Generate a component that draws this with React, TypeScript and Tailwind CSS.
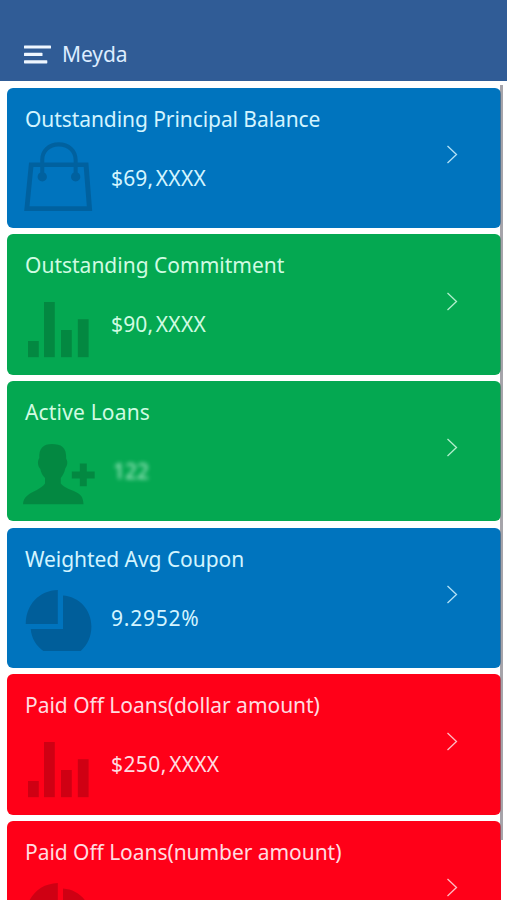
import type { ReactNode } from "react";
import clsx from "clsx";

type Card = {
  title: string;
  titleClass?: string;
  amount?: string;
  amountClass?: string;
  masked?: string;
  color: string;
  textColor: string;
  icon: ReactNode;
};

const cards: Card[] = [
  {
    title: "Outstanding Principal Balance",
    titleClass: "tracking-[-0.07px]",
    amount: "$69,",
    amountClass: "tracking-[0.15px]",
    masked: "XXXX",
    color: "bg-[#0074be]",
    textColor: "text-[#d3f4ff]",
    icon: <BagIcon />,
  },
  {
    title: "Outstanding Commitment",
    amount: "$90,",
    amountClass: "tracking-[0.15px]",
    masked: "XXXX",
    color: "bg-[#04a851]",
    textColor: "text-[#d0fbe2]",
    icon: <BarsIcon />,
  },
  {
    title: "Active Loans",
    titleClass: "tracking-[0.17px]",
    amount: "122",
    amountClass: "pl-[2px] font-medium opacity-75 blur-[2px]",
    color: "bg-[#04a851]",
    textColor: "text-[#d0fbe2]",
    icon: <UserPlusIcon />,
  },
  {
    title: "Weighted Avg Coupon",
    titleClass: "tracking-[-0.05px]",
    amount: "9.2952%",
    amountClass: "tracking-[0.75px]",
    color: "bg-[#0074be]",
    textColor: "text-[#d3f4ff]",
    icon: <PieIcon />,
  },
  {
    title: "Paid Off Loans(dollar amount)",
    titleClass: "tracking-[-0.03px]",
    amount: "$250,",
    amountClass: "tracking-[0.4px]",
    masked: "XXXX",
    color: "bg-[#ff0018]",
    textColor: "text-[#ffdce0]",
    icon: <BarsIcon />,
  },
  {
    title: "Paid Off Loans(number amount)",
    titleClass: "tracking-[-0.05px]",
    color: "bg-[#ff0018]",
    textColor: "text-[#ffdce0]",
    icon: <PieIcon />,
  },
];

export default function App() {
  return (
    <div className="relative flex h-[900px] w-[507px] flex-col overflow-hidden bg-white font-['Noto_Sans',sans-serif] text-[21px]">
      <header className="flex h-[81px] shrink-0 items-end bg-[#305c96] pb-[11px] pl-6">
        <MenuIcon />
        <h1 className="ml-[11px] leading-8 tracking-[-0.1px] text-[#dcecff]">Meyda</h1>
      </header>

      <main className="flex flex-col gap-[6.3px] pt-[6.5px] pr-[6px] pl-[7px]">
        {cards.map((card) => (
          <StatCard key={card.title} {...card} />
        ))}
      </main>

      {/* scroll thumb */}
      <div className="absolute top-[85px] right-[4px] h-[755px] w-[3px] bg-[#77737c]/65" />
    </div>
  );
}

function StatCard({ title, titleClass, amount, amountClass, masked, color, textColor, icon }: Card) {
  return (
    <section className={clsx("flex h-[140.4px] shrink-0 rounded-[6px] pl-4", color, textColor)}>
      <div className="flex flex-1 flex-col pt-[16px]">
        <h2 className={clsx("pl-[2px] leading-[30px] whitespace-nowrap", titleClass)}>{title}</h2>
        <div className="mt-[7px] flex">
          {icon}
          <p className="ml-4 flex pt-[22px] leading-[30px]">
            <span className={amountClass}>{amount}</span>
            {masked && <span className="ml-[2.5px] tracking-[0.25px]">{masked}</span>}
          </p>
        </div>
      </div>
      <svg className="mt-[57.5px] mr-[43px] shrink-0 opacity-85" width="12" height="19" viewBox="0 0 12 19" fill="none" stroke="currentColor" strokeWidth="1.3">
        <path d="M1.5 1L10.5 9.5L1.5 18" />
      </svg>
    </section>
  );
}

function MenuIcon() {
  return (
    <svg className="mb-[6px]" width="27" height="20" viewBox="0 0 27 20" fill="#eef6ff">
      <rect y="1.4" width="27" height="3.2" rx="0.6" />
      <rect y="8.8" width="18.5" height="3.2" rx="0.6" />
      <rect y="16.2" width="23.3" height="3.2" rx="0.6" />
    </svg>
  );
}

function BagIcon() {
  return (
    <svg className="shrink-0 text-black/16" width="72" height="72" viewBox="0 0.5 72 72">
      <path
        fill="currentColor"
        fillRule="evenodd"
        d="M6 22H17.2V19.5C17.2 9 25 1.8 35.8 1.8S54.7 9 54.7 19.5V22H65.4L69.2 70.5H1.2ZM10.4 26.4L6.5 65.8H63.8L60.7 26.4H54.7V32A4.7 4.7 0 1 1 50.6 32V26.4H21.3V32A4.7 4.7 0 1 1 17.2 32V26.4ZM21.3 22H50.6V19.5C50.6 11.5 44.5 6 35.8 6S21.3 11.5 21.3 19.5Z"
      />
    </svg>
  );
}

function BarsIcon() {
  return (
    <svg className="shrink-0 text-black/19" width="72" height="72" viewBox="0 0 72 72" fill="currentColor">
      <rect x="5" y="54" width="10.8" height="16.2" />
      <rect x="21" y="15" width="10.8" height="55.2" />
      <rect x="38" y="43" width="10.8" height="27.2" />
      <rect x="54.8" y="32.2" width="10.8" height="38" />
    </svg>
  );
}

function UserPlusIcon() {
  return (
    <svg className="shrink-0 text-black/19" width="72" height="72" viewBox="0 0 72 72" fill="currentColor">
      <path d="M16.3 24C15.8 14.5 20 10 29 10C38 10 43.8 13 43.2 25C45 27 44.6 31.5 42.3 34.5C41.5 38.5 39.5 42 37.8 44V49.5C41 54 50 56 55.5 59.5C59 62 60.3 65 60.5 70.2H0C0 67 1.5 63.5 5 61C10 57 19 54.5 22 49.5V44C19.5 41.5 18 38.5 17.3 35C14.5 32 14.3 27 16.3 24Z" />
      <path d="M56.8 29.5H63.8V37.5H71.7V44.4H63.8V52.2H56.8V44.4H48.8V37.5H56.8Z" />
    </svg>
  );
}

function PieIcon() {
  return (
    <svg className="shrink-0 text-black/19" width="72" height="72" viewBox="0 0.4 72 72" fill="currentColor">
      <path d="M34.8 9.3V43.4H2.7C2.7 24 16 9.8 34.8 9.3Z" />
      <path d="M40 15C56 16 68.4 29 68.4 46C68.4 56 64.5 64.5 57.8 70.4H20.3C13.5 65.5 8.5 58 7.7 48.4H40Z" />
    </svg>
  );
}
